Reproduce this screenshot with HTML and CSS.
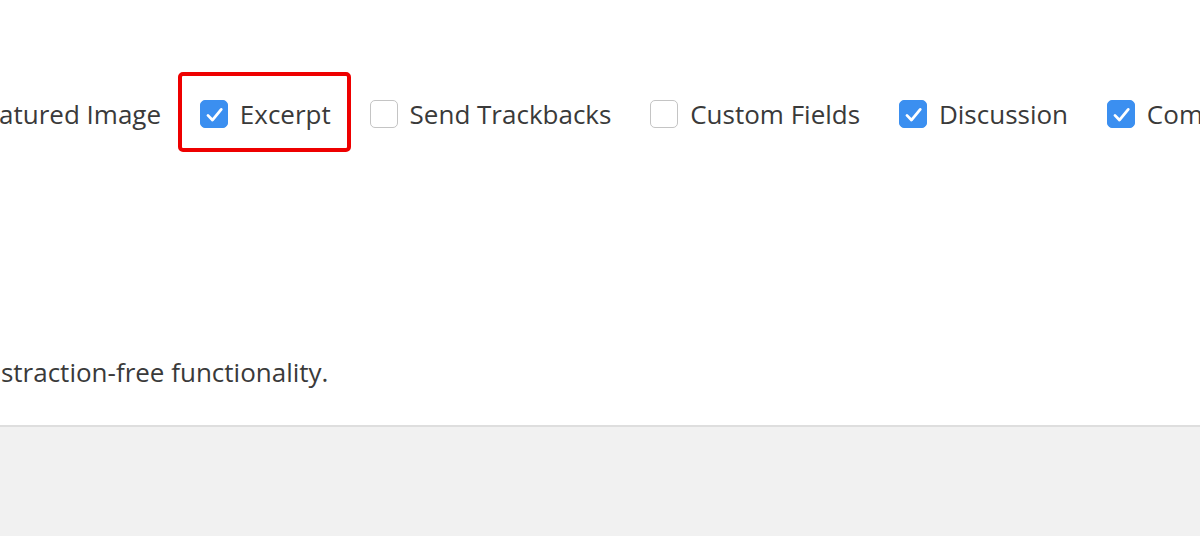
FILE: index.html
```html
<!DOCTYPE html>
<html>
<head>
<meta charset="utf-8">
<link rel="stylesheet" href="styles.css">
</head>
<body>
<div class="panel">
  <div class="options">
    <label class="opt"><span class="box checked"><svg viewBox="0 0 28 28"><path d="M7.5 15.5l4.8 5 9.5-11.5" /></svg></span><span class="txt">Featured Image</span></label>
    <label class="opt highlight"><span class="box checked"><svg viewBox="0 0 28 28"><path d="M7.5 15.5l4.8 5 9.5-11.5" /></svg></span><span class="txt">Excerpt</span></label>
    <label class="opt"><span class="box"></span><span class="txt">Send Trackbacks</span></label>
    <label class="opt"><span class="box"></span><span class="txt">Custom Fields</span></label>
    <label class="opt"><span class="box checked"><svg viewBox="0 0 28 28"><path d="M7.5 15.5l4.8 5 9.5-11.5" /></svg></span><span class="txt">Discussion</span></label>
    <label class="opt"><span class="box checked"><svg viewBox="0 0 28 28"><path d="M7.5 15.5l4.8 5 9.5-11.5" /></svg></span><span class="txt">Comments</span></label>
  </div>
  <p class="desc">Enable full-height editor and distraction-free functionality.</p>
</div>
<div class="footer"></div>
</body>
</html>
```
FILE: styles.css
```css
html, body {
  margin: 0;
  padding: 0;
  background: #f1f1f1;
  overflow: hidden;
}
body {
  width: 1200px;
  height: 536px;
  font-family: "Open Sans", "Liberation Sans", sans-serif;
  color: #3a3a3a;
}
.panel {
  background: #fff;
  height: 427px;
  border-bottom: 2px solid #dedede;
  padding-top: 100px;
  box-sizing: border-box;
  overflow: hidden;
}
.options {
  display: flex;
  align-items: center;
  gap: 38.8px;
  white-space: nowrap;
  margin-left: -69px;
  height: 28px;
}
.opt {
  display: flex;
  align-items: center;
  gap: 12px;
  font-size: 26px;
  position: relative;
}
.box {
  width: 28px;
  height: 28px;
  box-sizing: border-box;
  border: 1px solid #c4c4c4;
  border-radius: 5px;
  background: #fff;
  flex: none;
  display: flex;
}
.box.checked {
  background: #3b8ff0;
  border-color: #3b8ff0;
}
.box svg {
  width: 26px;
  height: 26px;
  fill: none;
  stroke: #fff;
  stroke-width: 3;
  stroke-linecap: round;
  stroke-linejoin: round;
}
.txt {
  line-height: 28px;
}
.highlight::after {
  content: "";
  position: absolute;
  left: -22px;
  right: -20px;
  top: -28px;
  bottom: -24px;
  border: 4px solid #ee0000;
  border-radius: 5px;
}
.desc {
  margin: 229px 0 0 -372px;
  font-size: 26px;
  line-height: 30px;
  white-space: nowrap;
}
```
